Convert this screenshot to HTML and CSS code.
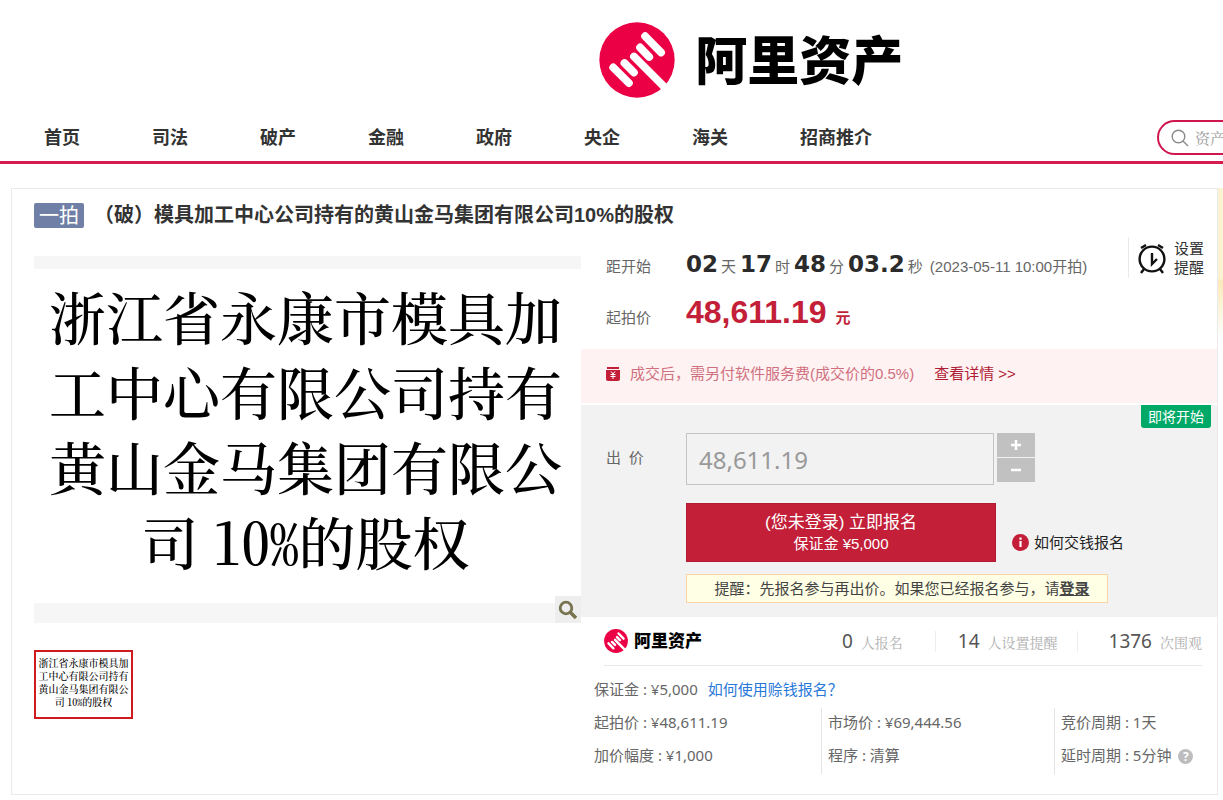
FILE: index.html
```html
<!DOCTYPE html>
<html lang="zh-CN">
<head>
    <meta charset="UTF-8">
    <meta name="viewport" content="width=device-width, initial-scale=1.0">
    <title>阿里资产</title>
    <link rel="stylesheet" href="styles.css">
</head>
<body>
    <svg class="symbols" aria-hidden="true">
        <symbol id="logo" viewBox="0 0 224 224">
            <circle cx="112" cy="112" r="111" fill="#eb0045"/>
            <path d="M136 42l47 48M121 75l27 28M103 102l100 100M75 121l28 28M42 134l46 46" fill="none" stroke="#fff" stroke-width="23" stroke-linecap="round"/>
        </symbol>
    </svg>

    <header class="header">
        <a href="#" class="logo">
            <svg class="logo-icon"><use href="#logo"/></svg>
            <span>阿里资产</span>
        </a>
    </header>

    <nav class="nav">
        <div class="nav-links">
            <a href="#">首页</a>
            <a href="#">司法</a>
            <a href="#">破产</a>
            <a href="#">金融</a>
            <a href="#">政府</a>
            <a href="#">央企</a>
            <a href="#">海关</a>
            <a href="#">招商推介</a>
        </div>
        <form class="search">
            <svg width="18" height="18" viewBox="0 0 18 18" fill="none" stroke="#8a8a8a" stroke-width="1.4">
                <circle cx="7.5" cy="7.5" r="6.3"/>
                <path d="M12 12l5 5"/>
            </svg>
            <input type="text" placeholder="资产" aria-label="搜索">
        </form>
    </nav>

    <div class="page">
        <main class="panel">
            <div class="title-row">
                <span class="badge">一拍</span>
                <h1>（破）模具加工中心公司持有的黄山金马集团有限公司10%的股权</h1>
            </div>

            <div class="columns">
                <section class="gallery">
                    <div class="photo">
                        <p>浙江省永康市模具加<br>工中心有限公司持有<br>黄山金马集团有限公<br>司 <span class="half">10%</span>的股权</p>
                        <button class="zoom" aria-label="放大">
                            <svg width="20" height="20" viewBox="0 0 20 20" fill="none" stroke="#77734f">
                                <circle cx="8" cy="8" r="5.8" stroke-width="2.8"/>
                                <path d="M12 12l6 6" stroke-width="3.6"/>
                            </svg>
                        </button>
                    </div>
                    <div class="thumb">浙江省永康市模具加<br>工中心有限公司持有<br>黄山金马集团有限公<br>司 <span class="half">10%</span>的股权</div>
                </section>

                <section class="info">
                    <div class="top">
                        <div class="prices">
                            <div class="row">
                                <span class="label">距开始</span>
                                <span class="countdown"><b>02</b>天<b>17</b>时<b>48</b>分<b>03.2</b>秒</span>
                                <span class="start-time">(2023-05-11 10:00开拍)</span>
                            </div>
                            <div class="row">
                                <span class="label">起拍价</span>
                                <span class="price">48,611.19 <small>元</small></span>
                            </div>
                        </div>
                        <button class="remind">
                            <svg width="28" height="32" viewBox="0 0 28 32" fill="none" stroke="#111" stroke-width="2.4">
                                <circle cx="14" cy="17" r="12.4"/>
                                <path d="M14 11v11l5-5M3 6l5-3M25 6l-5-3M6 27l-3 4M22 27l3 4"/>
                            </svg>
                            <span>设置<br>提醒</span>
                        </button>
                    </div>

                    <div class="fee">
                        <svg width="14" height="14" viewBox="0 0 14 14">
                            <path d="M1 0h12v2H1zM0 3h14v9q0 2-2 2H2q-2 0-2-2z" fill="#c31f39"/>
                            <path d="M5 4.500l2 2.500 2-2.500M4.500 7.500h5M4.500 9.500h5M7 7v5" fill="none" stroke="#fff"/>
                        </svg>
                        <span>成交后，需另付软件服务费(成交价的0.5%)</span>
                        <a href="#">查看详情 &gt;&gt;</a>
                    </div>

                    <form class="bid">
                        <span class="status">即将开始</span>
                        <label class="label" for="bid-price">出&nbsp; 价</label>
                        <div class="bid-fields">
                            <div class="bid-input">
                                <input id="bid-price" type="text" value="48,611.19">
                                <div class="stepper">
                                    <button type="button" aria-label="加价"><svg width="10" height="10" viewBox="0 0 10 10"><path d="M5 0v10M0 5h10" stroke="#fff" stroke-width="2.500"/></svg></button>
                                    <button type="button" aria-label="减价"><svg width="10" height="10" viewBox="0 0 10 10"><path d="M0 5h10" stroke="#fff" stroke-width="2.500"/></svg></button>
                                </div>
                            </div>
                            <div class="apply">
                                <button type="submit" class="apply-btn">(您未登录) 立即报名<small>保证金 ¥5,000</small></button>
                                <a href="#" class="how">
                                    <svg width="17" height="17" viewBox="0 0 17 17">
                                        <circle cx="8.500" cy="8.500" r="8.500" fill="#c31f39"/>
                                        <path d="M8.500 3.500v2.200M8.500 7v6" fill="none" stroke="#fff" stroke-width="2.200"/>
                                    </svg>
                                    如何交钱报名
                                </a>
                            </div>
                            <p class="tip">提醒：先报名参与再出价。如果您已经报名参与，请<a href="#">登录</a></p>
                        </div>
                    </form>

                    <div class="stats">
                        <a href="#" class="brand">
                            <svg width="24" height="24"><use href="#logo"/></svg>
                            阿里资产
                        </a>
                        <ul>
                            <li><b>0</b>人报名</li>
                            <li><b>14</b>人设置提醒</li>
                            <li><b>1376</b>次围观</li>
                        </ul>
                    </div>

                    <div class="details">
                        <p>保证金 : ¥5,000 <a href="#">如何使用赊钱报名？</a></p>
                        <div class="detail-grid">
                            <div>
                                <p>起拍价 : ¥48,611.19</p>
                                <p>加价幅度 : ¥1,000</p>
                            </div>
                            <div>
                                <p>市场价 : ¥69,444.56</p>
                                <p>程序 : 清算</p>
                            </div>
                            <div>
                                <p>竞价周期 : 1天</p>
                                <p>延时周期 : 5分钟 <span class="help">?</span></p>
                            </div>
                        </div>
                    </div>
                </section>
            </div>
        </main>
        <aside class="side"></aside>
    </div>
</body>
</html>
```
FILE: styles.css
```css
* {
    box-sizing: border-box;
}
body {
    margin: 0;
    font-family: "Noto Sans", "Noto Sans CJK SC", sans-serif;
    font-size: 15px;
    line-height: 20px;
    color: #666;
    background: #fff;
}
a {
    color: inherit;
    text-decoration: none;
}
p, h1, ul {
    margin: 0;
    padding: 0;
}
button {
    border: none;
    padding: 0;
    font: inherit;
    color: inherit;
    background: none;
    cursor: pointer;
}
svg {
    flex: none;
}
.symbols {
    position: absolute;
    width: 0;
    height: 0;
}

/* header */
.header {
    height: 120px;
    padding-left: 49%;
    display: flex;
    align-items: center;
}
.logo {
    display: flex;
    align-items: center;
    gap: 20px;
    font-size: 52px;
    line-height: 60px;
    font-weight: 900;
    color: #000;
    white-space: nowrap;
}
.logo-icon {
    width: 76px;
    height: 76px;
}
.nav {
    display: flex;
    justify-content: space-between;
    align-items: flex-start;
    height: 44px;
    padding-left: 44px;
    border-bottom: 3px solid #d51b50;
}
.nav-links {
    display: flex;
    gap: 72px;
    padding-top: 5px;
    font-size: 18px;
    line-height: 24px;
    font-weight: bold;
    color: #333;
}
.search {
    display: flex;
    align-items: center;
    gap: 6px;
    width: 66px;
    height: 35px;
    padding-left: 12px;
    border: 2px solid #d0164f;
    border-right: none;
    border-radius: 18px 0 0 18px;
    overflow: hidden;
}
.search input {
    width: 60px;
    flex: none;
    border: none;
    padding: 0;
    font: inherit;
}
.search input::placeholder {
    font-family: "Noto Serif CJK SC", "Noto Sans CJK SC", serif;
    color: #999;
}

/* auction panel */
.page {
    display: flex;
    padding: 24px 0 5px 11px;
}
.panel {
    flex: 1;
    min-width: 0;
    padding: 12px 0 20px 22px;
    border: 1px solid #eaeaea;
}
.side {
    width: 5px;
    height: 150px;
    background: linear-gradient(#fdf3d3 60%, #fbeab8 62%, #fff);
}
.title-row {
    display: flex;
    align-items: center;
    gap: 10px;
    height: 28px;
}
.badge {
    padding: 0 5px;
    font-size: 20px;
    line-height: 25px;
    color: #fff;
    background: #6f7fa5;
    border-radius: 2px;
}
.title-row h1 {
    font-family: "Liberation Sans", "Noto Sans CJK SC", sans-serif;
    font-size: 20px;
    line-height: 28px;
    color: #333;
}
.columns {
    display: grid;
    grid-template-columns: minmax(0, 547fr) minmax(0, 636fr);
    padding-top: 8px;
}
.gallery {
    padding-top: 19px;
}
.photo {
    position: relative;
    padding: 9px 4px 25px 0;
    border-top: 13px solid #f6f6f6;
    border-bottom: 20px solid #f6f6f6;
    font-size: 57px;
    line-height: 75px;
}
.photo, .thumb {
    font-family: "Noto Serif CJK SC", "Liberation Serif", serif;
    font-weight: 500;
    text-align: center;
    color: #000;
    white-space: nowrap;
}
.half {
    font-feature-settings: "hwid";
}
.zoom {
    position: absolute;
    right: 0;
    bottom: -20px;
    width: 26px;
    height: 27px;
    display: flex;
    align-items: center;
    justify-content: center;
    background: #eee;
}
.thumb {
    width: 99px;
    height: 69px;
    margin-top: 27px;
    padding-top: 4px;
    border: 2px solid #cf1a1e;
    font-size: 10px;
    line-height: 13px;
    overflow: hidden;
}
.top {
    display: flex;
    justify-content: space-between;
    height: 112px;
    padding: 0 13px 0 25px;
}
.prices {
    padding-top: 3px;
}
.row {
    display: flex;
    align-items: baseline;
    height: 48px;
    line-height: 48px;
    white-space: nowrap;
}
.label {
    width: 80px;
    flex: none;
}
.countdown b {
    padding: 0 3px 0 4px;
    font-family: "DejaVu Sans", sans-serif;
    font-size: 23px;
    color: #2b2b2b;
}
.countdown b:first-child {
    padding-left: 0;
}
.start-time, .price, .fee {
    font-family: "Liberation Sans", "Noto Sans CJK SC", sans-serif;
}
.start-time {
    margin-left: 7px;
}
.price {
    font-size: 32px;
    font-weight: bold;
    color: #c31f39;
}
.price small {
    font-size: 15px;
}
.remind {
    display: flex;
    align-items: center;
    gap: 8px;
    height: 41px;
    padding-left: 9px;
    border-left: 1px solid #eaeaea;
    line-height: 19px;
    color: #333;
}
.fee {
    display: flex;
    align-items: center;
    height: 56px;
    padding: 0 25px 4px;
    border-bottom: 2px solid #fff;
    color: #d0707f;
    background: #fef2f2;
}
.fee span {
    margin: 0 20px 0 10px;
}
.fee a {
    color: #b01c35;
}
.bid {
    position: relative;
    display: flex;
    height: 212px;
    padding: 28px 25px 0;
    background: #f2f2f2;
}
.bid .label {
    line-height: 48px;
}
.status {
    position: absolute;
    top: 0;
    right: 6px;
    padding: 0 7px;
    font-size: 14px;
    line-height: 23px;
    color: #fff;
    background: #00a967;
    border-radius: 0 0 3px 3px;
}
.bid-input, .apply {
    display: flex;
}
.bid-input {
    gap: 3px;
}
.bid-input input {
    width: 308px;
    height: 52px;
    padding: 0 12px;
    border: 1px solid #c4c4c4;
    font: inherit;
    font-size: 24px;
    color: #999;
    background: #f2f2f2;
}
.stepper {
    display: flex;
    flex-direction: column;
    gap: 1px;
}
.stepper button {
    display: flex;
    align-items: center;
    justify-content: center;
    width: 38px;
    height: 24px;
    background: #c1c1c1;
}
.apply {
    gap: 16px;
    margin-top: 18px;
    align-items: flex-end;
}
.apply-btn {
    width: 310px;
    height: 59px;
    border: 1px solid #b31b34;
    font-family: "Liberation Sans", "Noto Sans CJK SC", sans-serif;
    font-size: 17px;
    line-height: 22px;
    color: #fff;
    background: #c31f39;
}
.apply-btn small {
    display: block;
    font-size: 15px;
    line-height: 20px;
}
.how {
    display: flex;
    align-items: center;
    gap: 5px;
    padding-bottom: 10px;
    color: #222;
    white-space: nowrap;
}
.tip {
    width: 422px;
    margin-top: 12px;
    padding-left: 10px;
    border: 1px solid #fbd5a5;
    line-height: 27px;
    text-align: center;
    color: #444;
    background: #ffffe5;
    white-space: nowrap;
}
.tip a {
    font-weight: bold;
    text-decoration: underline;
}
.stats {
    display: flex;
    justify-content: space-between;
    align-items: center;
    height: 49px;
    margin: 0 15px 0 23px;
    border-bottom: 1px solid #e8e8e8;
    white-space: nowrap;
}
.brand {
    display: flex;
    align-items: center;
    gap: 6px;
    font-size: 17px;
    font-weight: 900;
    color: #000;
}
.stats ul {
    display: flex;
    list-style: none;
}
.stats li {
    padding-left: 22px;
    margin-left: 32px;
    border-left: 1px solid #eee;
    font-family: "Noto Serif CJK SC", "Noto Sans CJK SC", serif;
    font-size: 14px;
    color: #b0b0b0;
}
.stats li:first-child {
    border: none;
}
.stats li:last-child {
    padding-left: 31px;
    margin-left: 19px;
}
.stats b {
    margin-right: 8px;
    font-family: "Noto Sans", sans-serif;
    font-size: 19px;
    font-weight: normal;
    color: #555;
}
.details {
    padding: 9px 0 0 13px;
    line-height: 29px;
    white-space: nowrap;
}
.details a {
    margin-left: 6px;
    color: #2878d8;
}
.detail-grid {
    display: grid;
    grid-template-columns: 227fr 233fr 163fr;
    padding-top: 4px;
}
.detail-grid div {
    height: 66px;
}
.detail-grid div + div {
    padding-left: 6px;
    border-left: 1px solid #e4e4e4;
}
.detail-grid p + p {
    padding-top: 4px;
}
.help {
    display: inline-block;
    width: 15px;
    margin-left: 3px;
    border-radius: 50%;
    font-size: 12px;
    line-height: 15px;
    font-weight: bold;
    text-align: center;
    color: #fff;
    background: #bdbdbd;
}
```
